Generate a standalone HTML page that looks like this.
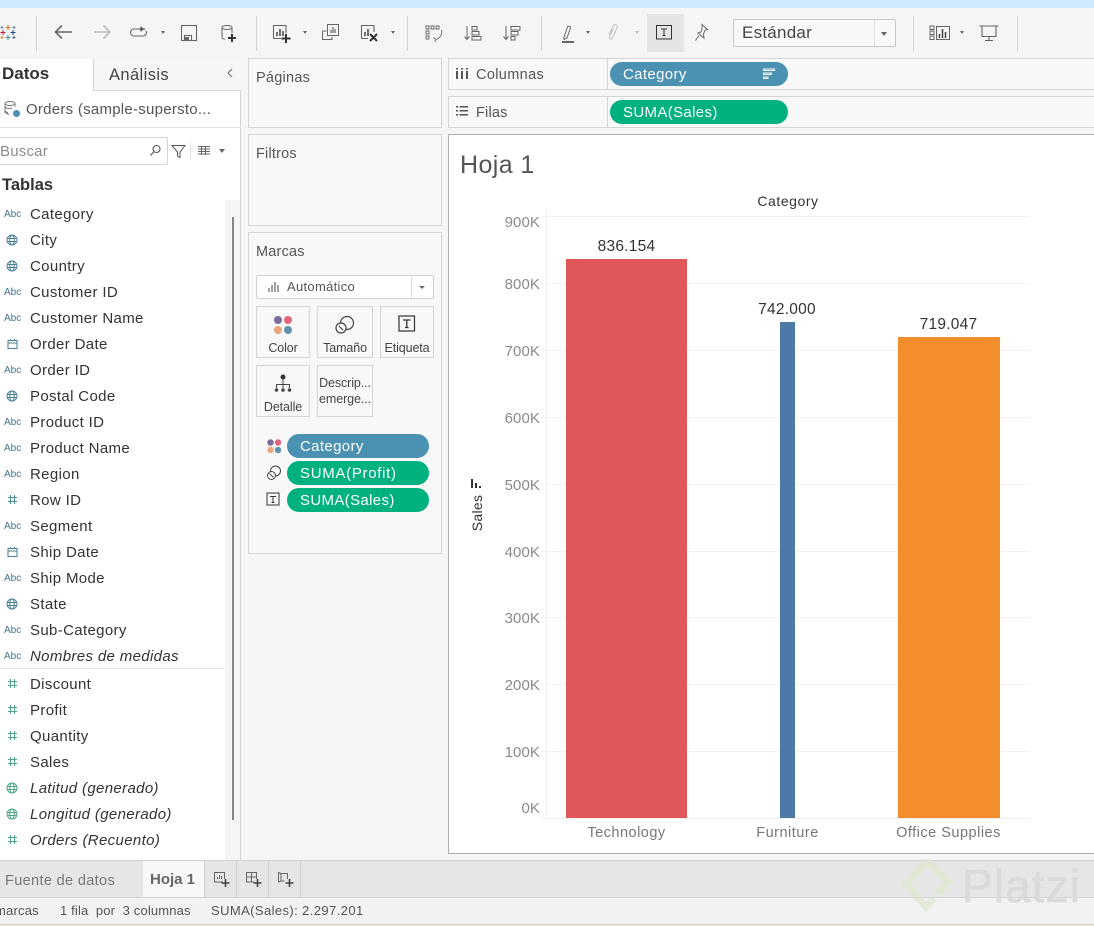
<!DOCTYPE html>
<html lang="es"><head><meta charset="utf-8"><title>Hoja 1</title>
<style>
html,body{margin:0;padding:0}
body{width:1094px;height:926px;overflow:hidden;position:relative;background:#f5f5f5;font-family:"Liberation Sans",sans-serif;color:#3b3b3b}
.a,.t,svg{position:absolute}
.t{white-space:nowrap;line-height:20px;font-size:15px}
.box{position:absolute;background:#f8f8f8;border:1px solid #d4d4d4;box-sizing:border-box}
.pill{position:absolute;border-radius:12px;color:#fff;font-size:15px;line-height:26px;height:24px;padding-left:13px;box-sizing:border-box;letter-spacing:.35px}
.blue{background:#4a91b2}.green{background:#00b180}
.card{position:absolute;background:#f8f8f8;border:1px solid #d4d4d4;box-sizing:border-box;text-align:center;font-size:12.5px;color:#444;letter-spacing:-.1px}
.f{position:absolute;left:30px;font-size:15px;line-height:20px;margin-top:1px;color:#333;white-space:nowrap;letter-spacing:.35px}
.i{font-style:italic}
.abc{position:absolute;left:4px;font-size:10px;line-height:12px;margin-top:1px;color:#3f7590;white-space:nowrap}
.y{position:absolute;left:490px;width:50px;text-align:right;font-size:15px;line-height:18px;margin-top:1px;color:#8a8a8a;letter-spacing:.1px}
.g{position:absolute;left:541px;width:489px;height:1px;background:#f1f1f1}
.x{position:absolute;font-size:14.5px;line-height:18px;margin-top:1px;color:#777;text-align:center;letter-spacing:.5px}
.l{position:absolute;font-size:15.5px;line-height:18px;margin-top:1px;color:#333;text-align:center;letter-spacing:.25px}
.sep{position:absolute;top:16px;width:1px;height:35px;background:#d4d4d4}
.dd{position:absolute;width:0;height:0;border-left:2.5px solid transparent;border-right:2.5px solid transparent;border-top:3px solid #666}
</style></head><body>
<div class="a" style="left:0;top:0;width:1094px;height:8px;background:#cde8ff"></div>
<div class="a" style="left:0;top:8px;width:1094px;height:50px;background:#f5f5f5"></div>

<!-- toolbar -->
<svg style="left:0;top:24px" width="17" height="17" viewBox="0 0 17 17" fill="none" stroke-width="1.100"><path d="M8 1v5M5.500 3.500h5" stroke="#e8762c"/><path d="M8 11v5M5.500 13.500h5" stroke="#5b879b"/><path d="M3 6v5M.5 8.500h5" stroke="#c72037"/><path d="M13 6v5M10.500 8.500h5" stroke="#1f447e"/><path d="M2 2v3M.5 3.500h3" stroke="#7099a6"/><path d="M14 2v3M12.500 3.500h3" stroke="#59879b"/><path d="M2 12v3M.5 13.500h3" stroke="#eb912b"/><path d="M14 12v3M12.500 13.500h3" stroke="#5b6591"/></svg>
<div class="sep" style="left:36px"></div>
<svg style="left:53px;top:22px" width="20" height="20" fill="none" stroke="#666" stroke-width="1.600"><path d="M19 10H2.500M9 3.500L2.500 10 9 16.500"/></svg>
<svg style="left:92px;top:22px" width="20" height="20" fill="none" stroke="#bdbdbd" stroke-width="1.600"><path d="M2 10h16M11.500 3.500L18 10l-6.500 6.500"/></svg>
<svg style="left:129px;top:23px" width="20" height="18" fill="none" stroke="#666" stroke-width="1.100"><path d="M10 6H5a3.500 3.500 0 0 0 0 7h9a3.500 3.500 0 0 0 3.500-3.500V8"/><path d="M10 6h6" stroke-width="1.400"/><path d="M11.500 3v6l3.500-3z" fill="#555" stroke="none"/></svg>
<div class="dd" style="left:161px;top:31px"></div>
<svg style="left:180px;top:24px" width="18" height="18" fill="none" stroke="#666" stroke-width="1.100"><rect x="1.500" y="1.500" width="15" height="15"/><path d="M4.500 16.500v-5h7v5" /><rect x="5" y="13" width="4" height="3" fill="#666" stroke="none"/></svg>
<svg style="left:220px;top:24px" width="20" height="20" fill="none" stroke="#666" stroke-width="1"><ellipse cx="7" cy="3.500" rx="5" ry="2"/><path d="M2 3.500V13c0 1 1 2 3 2.200M12 3.500V9"/><path d="M12 10v8M8 14h8" stroke="#333" stroke-width="2"/></svg>
<div class="sep" style="left:256px"></div>
<svg style="left:272px;top:24px" width="22" height="20" fill="none" stroke="#666" stroke-width="1.100"><path d="M14 9V1.500H1.500V14.500H9"/><path d="M5 12V8M8 12V5M11 12V7" stroke-width="1.500" stroke="#444"/><path d="M14 10v9M9.500 14.500h9" stroke="#333" stroke-width="2"/></svg>
<div class="dd" style="left:303px;top:31px"></div>
<svg style="left:321px;top:23px" width="20" height="20" fill="none" stroke="#666" stroke-width="1"><path d="M5.500 8H1.500v8.500H11V14"/><rect x="6.500" y="1.500" width="11" height="11"/><path d="M10 10V7M12 10V4M14 10V6" stroke-width="1.200"/></svg>
<svg style="left:360px;top:24px" width="22" height="20" fill="none" stroke="#666" stroke-width="1.100"><path d="M14 8V1.500H1.500V14.500H8"/><path d="M5 12V8M8 12V5" stroke-width="1.500" stroke="#444"/><path d="M10 10l7 7M17 10l-7 7" stroke="#333" stroke-width="2"/></svg>
<div class="dd" style="left:391px;top:31px"></div>
<div class="sep" style="left:407px"></div>
<svg style="left:425px;top:25px" width="18" height="18" fill="none" stroke="#666" stroke-width=".9"><path d="M1 1h3v3H1zM6 1h3v3H6zM11 1h3v3h-3zM1 6h3v3H1zM1 11h3v3H1z"/><path d="M16.500 5c1 4-1 8-5.500 9.500M8.500 12.500l2.500 2-1 2.500"/></svg>
<svg style="left:463px;top:25px" width="20" height="18" fill="none" stroke="#666" stroke-width="1"><path d="M4 1v13M1.500 11.500L4 14.500l2.500-3"/><rect x="9" y="1.500" width="5" height="3.500"/><rect x="9" y="6.500" width="7" height="3.500"/><rect x="9" y="11.500" width="9" height="3.500"/></svg>
<svg style="left:502px;top:25px" width="20" height="18" fill="none" stroke="#666" stroke-width="1"><path d="M4 1v13M1.500 11.500L4 14.500l2.500-3"/><rect x="9" y="1.500" width="9" height="3.500"/><rect x="9" y="6.500" width="7" height="3.500"/><rect x="9" y="11.500" width="4" height="3.500"/></svg>
<div class="sep" style="left:541px"></div>
<svg style="left:561px;top:24px" width="15" height="20" fill="none" stroke="#666" stroke-width="1"><path d="M3 13L6.500 3c.5-1.500 3.500-.5 3 1L6 14l-3 1.500z"/><path d="M1 18h12" stroke="#444" stroke-width="1.600"/></svg>
<div class="dd" style="left:586px;top:31px"></div>
<svg style="left:606px;top:23px" width="16" height="19" fill="none" stroke="#c4c4c4" stroke-width="1.100"><path d="M3 12L7 3c1.500-2.500 5-1 4 1.500L6.500 15c-1 2-3.500 1-3-1L7 6"/></svg>
<div class="dd" style="left:635px;top:31px;border-top-color:#bbb"></div>
<div class="a" style="left:647px;top:14px;width:37px;height:38px;background:#e4e4e4"></div>
<svg style="left:655px;top:24px" width="18" height="17" fill="none" stroke="#333" stroke-width="1"><rect x="1.500" y="1.500" width="15" height="13.500"/><path d="M6 5h6M9 5v6.500M7.500 11.500h3"/></svg>
<svg style="left:693px;top:23px" width="18" height="19" fill="none" stroke="#666" stroke-width="1"><path d="M9 1.500l5.500 5-2.500.5-1.500 4 .5 4L5 10l3-1 1-3z"/><path d="M6 12.500l-3.500 5"/></svg>
<div class="a" style="left:733px;top:19px;width:163px;height:28px;background:#f8f8f8;border:1px solid #c8c8c8;border-radius:2px;box-sizing:border-box"></div>
<div class="a" style="left:874px;top:20px;width:1px;height:26px;background:#e2e2e2"></div>
<div class="t" style="left:742px;top:23px;font-size:17px;color:#444;letter-spacing:.25px">Estándar</div>
<div class="dd" style="left:881px;top:32px;border-left-width:3.500px;border-right-width:3.500px;border-top-width:4px"></div>
<div class="sep" style="left:913px"></div>
<div class="sep" style="left:1017px"></div>
<svg style="left:929px;top:25px" width="22" height="16" fill="none" stroke="#666" stroke-width="1"><path d="M1 1h4v3.500H1zM1 6h4v3.500H1zM1 11h4v3.500H1zM7.500 1.500h13v13h-13z"/><path d="M10.500 13V9M13.500 13V4M16.500 13V7" stroke-width="1.500" stroke="#444"/></svg>
<div class="dd" style="left:960px;top:31px"></div>
<svg style="left:979px;top:24px" width="20" height="18" fill="none" stroke="#666" stroke-width="1.100"><path d="M.5 2h19M3 2v10.500h14V2M10 12.500v4M6 16.500h8"/></svg>

<!-- data pane -->
<div class="a" style="left:0;top:59px;width:241px;height:801px;background:#fff;border-right:1px solid #d4d4d4;box-sizing:border-box"></div>
<div class="a" style="left:93px;top:59px;width:148px;height:32px;background:#f6f6f6;border-left:1px solid #d4d4d4;border-bottom:1px solid #d4d4d4;box-sizing:border-box"></div>
<div class="t" style="left:2px;top:64px;font-size:17px;font-weight:700;color:#333">Datos</div>
<div class="t" style="left:109px;top:65px;font-size:16.500px;color:#444;letter-spacing:.4px">Análisis</div>
<svg style="left:226px;top:67px" width="8" height="12" fill="none" stroke="#666"><path d="M6 2L2 6l4 4"/></svg>
<svg style="left:3px;top:100px" width="18" height="18" fill="none" stroke="#777"><ellipse cx="7" cy="3.500" rx="5" ry="2"/><path d="M2 3.500v9l4 2M12 3.500v3M2 7c2 2 5 2 7 1M2 11l3 2"/><circle cx="13.500" cy="13.500" r="3.500" fill="#4a91b2" stroke="none"/></svg>
<div class="t" style="left:26px;top:100px;color:#555;letter-spacing:.26px">Orders (sample-supersto...</div>
<div class="a" style="left:0;top:127px;width:241px;height:1px;background:#e4e4e4"></div>
<div class="a" style="left:0;top:137px;width:168px;height:28px;background:#fff;border:1px solid #d4d4d4;border-left:0;border-radius:0 2px 2px 0;box-sizing:border-box"></div>
<div class="t" style="left:0;top:142px;color:#8d8d8d;letter-spacing:.2px">Buscar</div>
<svg style="left:149px;top:144px" width="13" height="13" fill="none" stroke="#555" stroke-width="1.100"><circle cx="7.500" cy="5" r="3.500"/><path d="M5 7.500L1.500 11.500"/></svg>
<svg style="left:171px;top:144px" width="16" height="15" fill="none" stroke="#555"><path d="M1 1.500h13L9 8v5.500L6.500 12V8z"/></svg>
<div class="a" style="left:190px;top:143px;width:1px;height:16px;background:#e4e4e4"></div>
<svg style="left:197px;top:145px" width="14" height="11" fill="none" stroke="#666"><path d="M1 1.500h12M1 4h12M1 6.500h12M1 9h12M4.500 1v9M8.500 1v9" stroke-width="1"/></svg>
<div class="dd" style="left:219px;top:149px;border-top-width:4px;border-left-width:3.500px;border-right-width:3.500px"></div>
<div class="t" style="left:2px;top:175px;font-size:16.500px;font-weight:700;color:#333">Tablas</div>
<div class="a" style="left:225px;top:200px;width:15px;height:660px;background:#f5f5f5"></div>
<div class="a" style="left:232px;top:217px;width:1.500px;height:603px;background:#858585"></div>
<div class="a" style="left:0;top:668px;width:225px;height:1px;background:#e4e4e4"></div>

<div class="abc" style="top:208px">Abc</div><div class="f" style="top:204px">Category</div>
<svg style="left:6px;top:234px" width="12" height="12" fill="none" stroke="#4a7f97"><circle cx="6" cy="6" r="5"/><ellipse cx="6" cy="6" rx="2.200" ry="5"/><path d="M1 4.500h10M1 7.500h10"/></svg><div class="f" style="top:230px">City</div>
<svg style="left:6px;top:260px" width="12" height="12" fill="none" stroke="#4a7f97"><circle cx="6" cy="6" r="5"/><ellipse cx="6" cy="6" rx="2.200" ry="5"/><path d="M1 4.500h10M1 7.500h10"/></svg><div class="f" style="top:256px">Country</div>
<div class="abc" style="top:286px">Abc</div><div class="f" style="top:282px">Customer ID</div>
<div class="abc" style="top:312px">Abc</div><div class="f" style="top:308px">Customer Name</div>
<svg style="left:7px;top:338px" width="11" height="11" fill="none" stroke="#4a7f97"><path d="M1 2.500h9v8H1zM1 5h9M3.500 1v2M7.500 1v2"/></svg><div class="f" style="top:334px">Order Date</div>
<div class="abc" style="top:364px">Abc</div><div class="f" style="top:360px">Order ID</div>
<svg style="left:6px;top:390px" width="12" height="12" fill="none" stroke="#4a7f97"><circle cx="6" cy="6" r="5"/><ellipse cx="6" cy="6" rx="2.200" ry="5"/><path d="M1 4.500h10M1 7.500h10"/></svg><div class="f" style="top:386px">Postal Code</div>
<div class="abc" style="top:416px">Abc</div><div class="f" style="top:412px">Product ID</div>
<div class="abc" style="top:442px">Abc</div><div class="f" style="top:438px">Product Name</div>
<div class="abc" style="top:468px">Abc</div><div class="f" style="top:464px">Region</div>
<svg style="left:7px;top:494px" width="11" height="11" fill="none" stroke="#4a8f97"><path d="M3.500 1v9M7.500 1v9M1 3.500h9M1 7.500h9"/></svg><div class="f" style="top:490px">Row ID</div>
<div class="abc" style="top:520px">Abc</div><div class="f" style="top:516px">Segment</div>
<svg style="left:7px;top:546px" width="11" height="11" fill="none" stroke="#4a7f97"><path d="M1 2.500h9v8H1zM1 5h9M3.500 1v2M7.500 1v2"/></svg><div class="f" style="top:542px">Ship Date</div>
<div class="abc" style="top:572px">Abc</div><div class="f" style="top:568px">Ship Mode</div>
<svg style="left:6px;top:598px" width="12" height="12" fill="none" stroke="#4a7f97"><circle cx="6" cy="6" r="5"/><ellipse cx="6" cy="6" rx="2.200" ry="5"/><path d="M1 4.500h10M1 7.500h10"/></svg><div class="f" style="top:594px">State</div>
<div class="abc" style="top:624px">Abc</div><div class="f" style="top:620px">Sub-Category</div>
<div class="abc" style="top:650px">Abc</div><div class="f i" style="top:646px">Nombres de medidas</div>
<svg style="left:7px;top:678px" width="11" height="11" fill="none" stroke="#4fa58a"><path d="M3.500 1v9M7.500 1v9M1 3.500h9M1 7.500h9"/></svg><div class="f" style="top:674px">Discount</div>
<svg style="left:7px;top:704px" width="11" height="11" fill="none" stroke="#4fa58a"><path d="M3.500 1v9M7.500 1v9M1 3.500h9M1 7.500h9"/></svg><div class="f" style="top:700px">Profit</div>
<svg style="left:7px;top:730px" width="11" height="11" fill="none" stroke="#4fa58a"><path d="M3.500 1v9M7.500 1v9M1 3.500h9M1 7.500h9"/></svg><div class="f" style="top:726px">Quantity</div>
<svg style="left:7px;top:756px" width="11" height="11" fill="none" stroke="#4fa58a"><path d="M3.500 1v9M7.500 1v9M1 3.500h9M1 7.500h9"/></svg><div class="f" style="top:752px">Sales</div>
<svg style="left:6px;top:782px" width="12" height="12" fill="none" stroke="#4fa58a"><circle cx="6" cy="6" r="5"/><ellipse cx="6" cy="6" rx="2.200" ry="5"/><path d="M1 4.500h10M1 7.500h10"/></svg><div class="f i" style="top:778px">Latitud (generado)</div>
<svg style="left:6px;top:808px" width="12" height="12" fill="none" stroke="#4fa58a"><circle cx="6" cy="6" r="5"/><ellipse cx="6" cy="6" rx="2.200" ry="5"/><path d="M1 4.500h10M1 7.500h10"/></svg><div class="f i" style="top:804px">Longitud (generado)</div>
<svg style="left:7px;top:834px" width="11" height="11" fill="none" stroke="#4fa58a"><path d="M3.500 1v9M7.500 1v9M1 3.500h9M1 7.500h9"/></svg><div class="f i" style="top:830px">Orders (Recuento)</div>

<!-- middle cards -->
<div class="box" style="left:248px;top:58px;width:194px;height:70px"></div>
<div class="t" style="left:256px;top:68px;color:#555;font-size:14.500px;letter-spacing:.25px">Páginas</div>
<div class="box" style="left:248px;top:134px;width:194px;height:92px"></div>
<div class="t" style="left:256px;top:144px;color:#555;font-size:14.500px;letter-spacing:.2px">Filtros</div>
<div class="box" style="left:248px;top:232px;width:194px;height:322px"></div>
<div class="t" style="left:256px;top:242px;color:#555;font-size:14.500px;letter-spacing:.2px">Marcas</div>
<div class="a" style="left:256px;top:275px;width:178px;height:24px;background:#fff;border:1px solid #d0d0d0;border-radius:2px;box-sizing:border-box"></div>
<div class="a" style="left:411px;top:276px;width:1px;height:22px;background:#ddd"></div>
<svg style="left:268px;top:281px" width="12" height="12" fill="none" stroke="#555" stroke-width="1.100"><path d="M1 7v4M4 4v7M7 1v10M10 4v7"/></svg>
<div class="t" style="left:287px;top:277px;font-size:13px;color:#555;letter-spacing:.3px">Automático</div>
<div class="dd" style="left:419px;top:286px;border-left-width:3.500px;border-right-width:3.500px;border-top-width:3.500px"></div>

<div class="card" style="left:256px;top:306px;width:54px;height:52px;padding-top:33px;line-height:16px">Color</div>
<svg style="left:273px;top:315px" width="20" height="20"><circle cx="5" cy="5" r="4" fill="#7b6a9a"/><circle cx="15" cy="5" r="4" fill="#e0657f"/><circle cx="5" cy="15" r="4" fill="#e8a67f"/><circle cx="15" cy="15" r="4" fill="#5f93a8"/></svg>
<div class="card" style="left:317px;top:306px;width:56px;height:52px;padding-top:33px;line-height:16px">Tamaño</div>
<svg style="left:335px;top:315px" width="20" height="20" fill="none" stroke="#444" stroke-width="1.200"><circle cx="12" cy="8" r="6.500"/><circle cx="6" cy="13" r="5" fill="#f8f8f8"/><path d="M4 11l4 4"/></svg>
<div class="card" style="left:380px;top:306px;width:54px;height:52px;padding-top:33px;line-height:16px">Etiqueta</div>
<svg style="left:398px;top:315px" width="18" height="17" fill="none" stroke="#333" stroke-width="1.200"><rect x="1" y="1" width="15.500" height="15"/><path d="M5 5h7.500M8.800 5v7.500M7 12.500h3.500" stroke-width="1.300"/></svg>
<div class="card" style="left:256px;top:365px;width:54px;height:52px;padding-top:33px;line-height:16px">Detalle</div>
<svg style="left:273px;top:374px" width="20" height="19" fill="none" stroke="#444"><circle cx="10" cy="3" r="2.500" fill="#333" stroke="none"/><path d="M10 5v5M3.500 14v-3.500h13V14M10 10v4"/><circle cx="3.500" cy="16" r="1.800" fill="#444" stroke="none"/><circle cx="10" cy="16" r="1.800" fill="#444" stroke="none"/><circle cx="16.500" cy="16" r="1.800" fill="#444" stroke="none"/></svg>
<div class="card" style="left:317px;top:365px;width:56px;height:52px;padding-top:9px;line-height:16px;white-space:nowrap;overflow:hidden">Descrip...<br>emerge...</div>

<svg style="left:267px;top:439px" width="15" height="15"><circle cx="3.500" cy="3.500" r="3.200" fill="#7b6a9a"/><circle cx="11" cy="3.500" r="3.200" fill="#e0657f"/><circle cx="3.500" cy="11" r="3.200" fill="#e8a67f"/><circle cx="11" cy="11" r="3.200" fill="#5f93a8"/></svg>
<div class="pill blue" style="left:287px;top:434px;width:142px">Category</div>
<svg style="left:266px;top:465px" width="16" height="16" fill="none" stroke="#444"><circle cx="9.500" cy="6" r="5"/><circle cx="5.500" cy="10.500" r="4" fill="#f8f8f8"/><path d="M3.500 8.500l4 4"/></svg>
<div class="pill green" style="left:287px;top:461px;width:142px;letter-spacing:.7px">SUMA(Profit)</div>
<svg style="left:266px;top:492px" width="15" height="15" fill="none" stroke="#333"><rect x="1" y="1" width="12" height="12"/><path d="M4 4.500h6M7 4.500v6M5.500 10.500h3"/></svg>
<div class="pill green" style="left:287px;top:488px;width:142px">SUMA(Sales)</div>

<!-- shelves -->
<div class="a" style="left:448px;top:58px;width:646px;height:32px;background:#f8f8f8;border:1px solid #d4d4d4;border-right:0;box-sizing:border-box"></div>
<div class="a" style="left:448px;top:96px;width:646px;height:32px;background:#f8f8f8;border:1px solid #d4d4d4;border-right:0;box-sizing:border-box"></div>
<div class="a" style="left:607px;top:58px;width:1px;height:32px;background:#d4d4d4"></div>
<div class="a" style="left:607px;top:96px;width:1px;height:32px;background:#d4d4d4"></div>
<svg style="left:456px;top:68px" width="12" height="12" fill="#555"><path d="M0 3h2v8H0zM5 3h2v8H5zM10 3h2v8h-2zM0 0h2v1.500H0zM5 0h2v1.500H5zM10 0h2v1.500h-2z"/></svg>
<div class="t" style="left:476px;top:65px;color:#555;font-size:14.500px;letter-spacing:.35px;margin-top:0">Columnas</div>
<svg style="left:456px;top:106px" width="12" height="10" fill="#555"><path d="M0 0h2v1.500H0zM3.500 0H12v1.500H3.500zM0 4h2v1.500H0zM3.500 4H12v1.500H3.500zM0 8h2v1.500H0zM3.500 8H12v1.500H3.500z"/></svg>
<div class="t" style="left:476px;top:103px;color:#555;font-size:14.500px;letter-spacing:.2px">Filas</div>
<div class="pill blue" style="left:610px;top:62px;width:178px;padding-left:13px">Category</div>
<svg style="left:763px;top:68px" width="13" height="12" fill="none" stroke="#fff" stroke-width="1"><path d="M.5 1h11v1.500H.5zM.5 5h8v1.500h-8zM.5 9h4.500v1.500H.5z"/></svg>
<div class="pill green" style="left:610px;top:100px;width:178px">SUMA(Sales)</div>

<!-- view -->
<div class="a" style="left:448px;top:134px;width:646px;height:720px;background:#fff;border:1px solid #aeaeae;border-right:0;box-sizing:border-box"></div>
<div class="t" style="left:460px;top:150px;font-size:25px;line-height:30px;color:#555;letter-spacing:.4px">Hoja 1</div>
<div class="l" style="left:688px;top:191px;width:200px;font-size:14px;color:#333;letter-spacing:.55px">Category</div>

<div class="g" style="top:216px"></div><div class="g" style="top:283px"></div><div class="g" style="top:350px"></div><div class="g" style="top:417px"></div><div class="g" style="top:484px"></div><div class="g" style="top:551px"></div><div class="g" style="top:617px"></div><div class="g" style="top:684px"></div><div class="g" style="top:751px"></div><div class="g" style="top:818px"></div>
<div class="a" style="left:546px;top:210px;width:1px;height:608px;background:#f1f1f1"></div>

<div class="y" style="top:213px">900K</div>
<div class="y" style="top:275px">800K</div>
<div class="y" style="top:342px">700K</div>
<div class="y" style="top:409px">600K</div>
<div class="y" style="top:476px">500K</div>
<div class="y" style="top:543px">400K</div>
<div class="y" style="top:609px">300K</div>
<div class="y" style="top:676px">200K</div>
<div class="y" style="top:743px">100K</div>
<div class="y" style="top:799px">0K</div>

<div class="a" style="left:566px;top:259px;width:121px;height:559px;background:#e15759"></div>
<div class="a" style="left:780px;top:322px;width:15px;height:496px;background:#4e79a7"></div>
<div class="a" style="left:898px;top:337px;width:102px;height:481px;background:#f28e2b"></div>
<div class="l" style="left:566px;top:237px;width:121px">836.154</div>
<div class="l" style="left:727px;top:300px;width:120px">742.000</div>
<div class="l" style="left:888px;top:315px;width:121px">719.047</div>
<div class="x" style="left:546px;top:823px;width:161px">Technology</div>
<div class="x" style="left:707px;top:823px;width:161px">Furniture</div>
<div class="x" style="left:868px;top:823px;width:161px">Office Supplies</div>

<div class="t" style="left:446px;top:503px;width:62px;text-align:center;font-size:14px;color:#333;transform:rotate(-90deg);letter-spacing:.3px">Sales</div>
<svg style="left:470px;top:479px" width="12" height="11" fill="#333"><path d="M1 0h2v9H1zM5 4h2v5H5zM9 7h2v2H9z"/></svg>

<!-- bottom -->
<div class="a" style="left:0;top:860px;width:1094px;height:37px;background:#e6e6e6;border-top:1px solid #d0d0d0;box-sizing:border-box"></div>
<div class="a" style="left:143px;top:861px;width:61px;height:36px;background:#f8f8f8"></div>
<div class="t" style="left:5px;top:871px;color:#777;letter-spacing:.35px;font-size:14.500px">Fuente de datos</div>
<div class="t" style="left:150px;top:870px;font-weight:700;font-size:15px;color:#666">Hoja 1</div>
<div class="a" style="left:204px;top:861px;width:1px;height:36px;background:#d0d0d0"></div>
<div class="a" style="left:236px;top:861px;width:1px;height:36px;background:#d0d0d0"></div>
<div class="a" style="left:268px;top:861px;width:1px;height:36px;background:#d0d0d0"></div>
<div class="a" style="left:300px;top:861px;width:1px;height:36px;background:#d0d0d0"></div>
<svg style="left:213px;top:871px" width="17" height="17" fill="none" stroke="#666"><path d="M10 11H1.500V1.500h10V8"/><path d="M4.500 8V6M6.500 8V4M8.500 8V5"/><path d="M12.500 8v8M8.500 12h8" stroke="#444" stroke-width="1.600"/></svg>
<svg style="left:245px;top:871px" width="17" height="17" fill="none" stroke="#666"><path d="M9 11H1.500V1.500h10V8M1.500 6h10M6.500 1.500V11"/><path d="M12.500 8v8M8.500 12h8" stroke="#444" stroke-width="1.600"/></svg>
<svg style="left:277px;top:871px" width="17" height="17" fill="none" stroke="#666"><path d="M4 2.500L1.500 1.500V11L4 10h3.500M4 2.500h6.500V8M4 2.500V10"/><path d="M12.500 8v8M8.500 12h8" stroke="#444" stroke-width="1.600"/></svg>
<div class="a" style="left:0;top:897px;width:1094px;height:27px;background:#f2f2f2;border-top:1px solid #d4d4d4;box-sizing:border-box"></div>
<div class="a" style="left:0;top:924px;width:1094px;height:2px;background:#f4ead9;border-top:1px solid #d8d0c4;box-sizing:border-box"></div>
<div class="t" style="left:-5px;top:901px;font-size:13px;color:#555;letter-spacing:.2px">marcas</div>
<div class="t" style="left:60px;top:901px;font-size:13px;color:#555;letter-spacing:.15px">1 fila&nbsp; por&nbsp; 3 columnas</div>
<div class="t" style="left:211px;top:901px;font-size:13px;color:#555;letter-spacing:.4px">SUMA(Sales): 2.297.201</div>

<!-- watermark -->
<svg style="left:900px;top:855px" width="60" height="64" fill="none" stroke="#dfe8cf" stroke-width="7" opacity=".7"><path d="M27 6L6 29l20 23 8-9"/><path d="M27 6l21 21-11 12"/></svg>
<div class="t" style="left:962px;top:858px;font-size:46px;line-height:56px;color:#dadada;letter-spacing:1.100px;-webkit-text-stroke:.6px #dadada">Platzi</div>
</body></html>
